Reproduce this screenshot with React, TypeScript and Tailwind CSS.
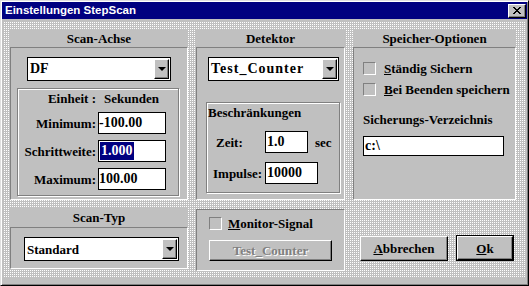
import React from "react";

// Win 3.x / 95 style bevels
const raised =
  "border border-t-white border-l-white border-r-black border-b-black shadow-[inset_-1px_-1px_0_#808080]";
const sunken = "border border-t-[#808080] border-l-[#808080] border-r-white border-b-white";
const etched = "border border-[#808080] shadow-[inset_1px_1px_0_#fff,1px_1px_0_#fff]";

function ArrowButton() {
  return (
    <div className={`flex h-[20px] w-[15px] items-center justify-center bg-[#c0c0c0] ${raised}`}>
      <div className="h-0 w-0 border-x-[4px] border-t-[4px] border-x-transparent border-t-black" />
    </div>
  );
}

function Combo({ children, className }: { children: React.ReactNode; className: string }) {
  return (
    <div className={`flex h-[24px] items-center justify-between border border-black bg-white pl-[2px] pr-[1px] ${className}`}>
      <span>{children}</span>
      <ArrowButton />
    </div>
  );
}

function Field({ children, className }: { children: React.ReactNode; className: string }) {
  return (
    <div className={`flex items-center border border-black bg-white text-[14px] leading-none ${className}`}>
      {children}
    </div>
  );
}

function Check() {
  return <div className={`h-[13px] w-[13px] shrink-0 bg-[#c0c0c0] ${sunken}`} />;
}

function FieldRow({ label, children }: { label: string; children: React.ReactNode }) {
  return (
    <div className="mt-[6px] flex items-center">
      <span className="w-[78px] text-right">{label}</span>
      <Field className="ml-[2px] h-[22px] w-[68px]">{children}</Field>
    </div>
  );
}

function ScanAchse() {
  return (
    <div className="flex flex-col bg-[#c0c0c0]">
      <div className="flex h-[17px] items-center justify-center">Scan-Achse</div>
      <div className={`flex-1 pt-[9px] ${sunken}`}>
        <Combo className="ml-[16px] w-[144px] text-[14px]">DF</Combo>
        <div className={`ml-[6px] mt-[7px] h-[108px] w-[162px] ${etched}`}>
          <div className="mt-[2px] flex h-[15px] items-center">
            <span className="w-[78px] text-right">Einheit :</span>
            <span className="ml-[8px]">Sekunden</span>
          </div>
          <FieldRow label="Minimum:">-100.00</FieldRow>
          <FieldRow label="Schrittweite:">
            <span className="ml-[1px] bg-[#000080] px-[1px] py-[2px] text-white">1.000</span>
          </FieldRow>
          <FieldRow label="Maximum:">100.00</FieldRow>
        </div>
      </div>
    </div>
  );
}

function Detektor() {
  return (
    <div className="flex flex-col bg-[#c0c0c0]">
      <div className="flex h-[17px] items-center justify-center">Detektor</div>
      <div className={`flex-1 pt-[9px] ${sunken}`}>
        <Combo className="ml-[11px] w-[131px] text-[14px] tracking-[1px]">Test_Counter</Combo>
        <div className={`ml-[9px] mt-[21px] h-[91px] w-[134px] ${etched}`}>
          <div className="mt-[2px] h-[15px] pl-[1px] leading-[15px]">Beschränkungen</div>
          <div className="mt-[11px] flex items-center">
            <span className="w-[58px] pl-[9px]">Zeit:</span>
            <Field className="h-[22px] w-[43px] items-start pl-[1px] pt-[3px]">1.0</Field>
            <span className="ml-[7px]">sec</span>
          </div>
          <div className="mt-[9px] flex items-center">
            <span className="w-[58px] pl-[6px]">Impulse:</span>
            <Field className="h-[22px] w-[53px] pl-[1px]">10000</Field>
          </div>
        </div>
      </div>
    </div>
  );
}

function Speicher() {
  return (
    <div className="flex flex-col bg-[#c0c0c0]">
      <div className="flex h-[17px] items-center justify-center">Speicher-Optionen</div>
      <div className={`flex-1 pl-[9px] pt-[14px] ${sunken}`}>
        <div className="flex items-center">
          <Check />
          <span className="ml-[8px]">
            <span className="underline">S</span>tändig Sichern
          </span>
        </div>
        <div className="mt-[8px] flex items-center">
          <Check />
          <span className="ml-[8px]">
            <span className="underline">B</span>ei Beenden speichern
          </span>
        </div>
        <div className="mt-[16px] h-[15px] leading-[15px]">Sicherungs-Verzeichnis</div>
        <Field className="mt-[9px] h-[20px] w-[141px] pl-[1px] text-[13px]">c:\</Field>
      </div>
    </div>
  );
}

function ScanTyp() {
  return (
    <div className="flex h-[62px] flex-col bg-[#c0c0c0]">
      <div className="flex h-[20px] items-center justify-center">Scan-Typ</div>
      <div className={`flex-1 pt-[9px] ${sunken}`}>
        <Combo className="ml-[13px] w-[155px]">Standard</Combo>
      </div>
    </div>
  );
}

function Monitor() {
  return (
    <div className={`mt-[2px] h-[62px] bg-[#c0c0c0] pl-[12px] pt-[7px] ${sunken}`}>
      <div className="flex items-center">
        <Check />
        <span className="ml-[6px]">
          <span className="underline">M</span>onitor-Signal
        </span>
      </div>
      <div
        className={`mt-[10px] flex h-[21px] w-[123px] items-center justify-center bg-[#c0c0c0] text-[#808080] [text-shadow:1px_1px_0_#fff] ${raised}`}
      >
        Test_Counter
      </div>
    </div>
  );
}

function Buttons() {
  return (
    <div className="flex items-end justify-end gap-[8px] pb-[10px] pr-[2px]">
      <div className={`flex h-[25px] w-[88px] items-center justify-center bg-[#c0c0c0] ${raised}`}>
        <span>
          <span className="underline">A</span>bbrechen
        </span>
      </div>
      <div className="h-[26px] w-[58px] border border-black">
        <div
          className={`flex h-full w-full items-center justify-center bg-[#c0c0c0] ${raised}`}
        >
          <span>
            <span className="underline">O</span>k
          </span>
        </div>
      </div>
    </div>
  );
}

export default function App() {
  return (
    <div className="h-[286px] w-[529px] bg-white">
      <div className="flex h-full w-full flex-col border border-t-[#dfdfdf] border-l-[#dfdfdf] border-r-black border-b-black bg-[#c0c0c0] p-[1px] shadow-[inset_1px_1px_0_#fff,inset_-1px_-1px_0_#808080]">
        {/* Title bar */}
        <div className="flex h-[17px] items-center justify-between bg-[#000080] pl-[3px] pr-[1px]">
          <span className="font-['Liberation_Sans',Arial,sans-serif] text-[11.5px] font-bold leading-none text-white">
            Einstellungen StepScan
          </span>
          <div className={`flex h-[14px] w-[18px] items-center justify-center bg-[#c0c0c0] ${raised}`}>
            <svg width="8" height="7" viewBox="0 0 8 7" shapeRendering="crispEdges">
              <path d="M0 0h2v1h-2zM6 0h2v1h-2zM1 1h2v1h-2zM5 1h2v1h-2zM2 2h4v1h-4zM3 3h2v1h-2zM2 4h4v1h-4zM1 5h2v1h-2zM5 5h2v1h-2zM0 6h2v1h-2zM6 6h2v1h-2z" fill="#000" />
            </svg>
          </div>
        </div>

        {/* Client area */}
        <div className="ml-[1px] mr-[2px] mt-[2px] grid h-[256px] grid-cols-[178px_149px_163px] grid-rows-[170px_64px] gap-x-[8px] gap-y-[7px] bg-[#c0c0c0] bg-[conic-gradient(from_90deg_at_1px_1px,#fff_90deg,#c0c0c0_0)] bg-[length:2px_2px] pl-[7px] pt-[9px] font-['Liberation_Serif','Times_New_Roman',serif] text-[13px] font-bold leading-none text-black">
          <ScanAchse />
          <Detektor />
          <Speicher />
          <ScanTyp />
          <Monitor />
          <Buttons />
        </div>
      </div>
    </div>
  );
}
